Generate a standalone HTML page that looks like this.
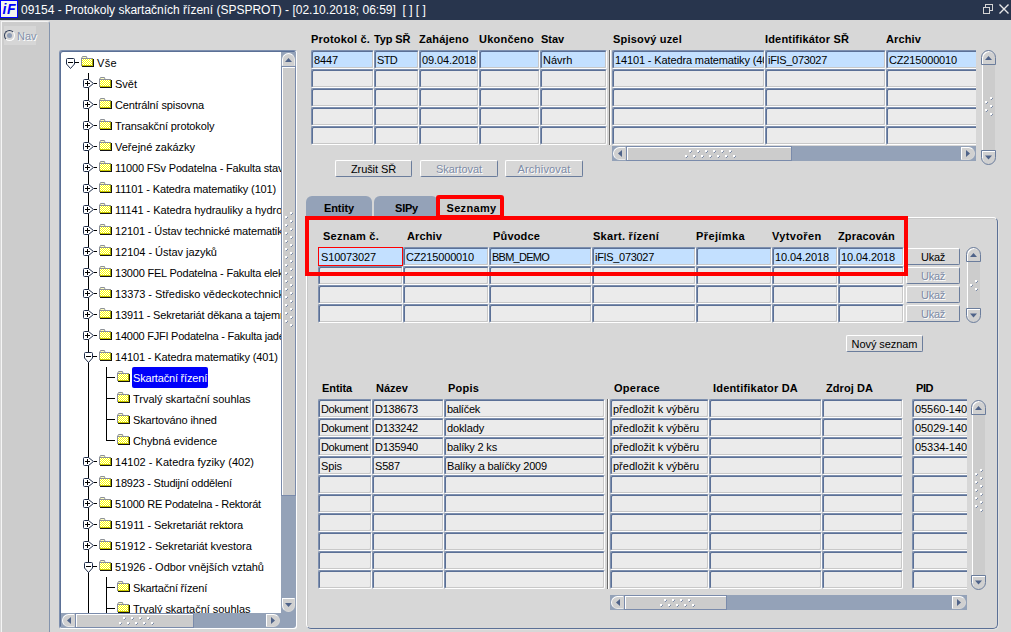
<!DOCTYPE html>
<html lang="cs"><head><meta charset="utf-8"><title>09154 - Protokoly skartačních řízení</title>
<style>
html,body{margin:0;padding:0}
body{width:1011px;height:632px;overflow:hidden;background:#d7d7d7;position:relative;font-family:"Liberation Sans",sans-serif;font-size:11px;color:#000}
div,span{box-sizing:border-box}
.a{position:absolute}
#title{left:0;top:0;width:1011px;height:20px;background:#28354d;color:#fff;font-size:12px;line-height:20px;white-space:nowrap}
#title span.tt{position:absolute;left:21px;top:0}
#nav{left:1px;top:21px;width:49px;height:611px;background:#cccccc;border-left:1px solid #f4f4f4;border-top:1px solid #f4f4f4;border-right:1px solid #8494ad;border-top-right-radius:3px}
.f{position:absolute;height:19px;border:1px solid;border-color:#7d8fae #fff #fff #7d8fae;border-radius:2px;background:#ebebeb;box-shadow:inset 1px 1px 0 #5b7096,inset -1px -1px 0 #c8c8c8;line-height:18px;padding-left:2px;white-space:nowrap;overflow:hidden;font-size:11px}
.f.s{background:#c3e0ff}
.l{position:absolute;font-weight:bold;font-size:11px;line-height:13px;white-space:nowrap}
.b{position:absolute;height:17px;border:1px solid;border-color:#fff #6b7d9c #6b7d9c #fff;border-radius:2px;background:#d7d7d7;text-align:center;line-height:16px;font-size:11px;white-space:nowrap}
.b.d{color:#7d8ba6;text-shadow:1px 1px 0 #fff}
.tab{position:absolute;top:196px;height:20px;background:#94a2b8;border-radius:6px 6px 0 0;font-weight:bold;text-align:center;line-height:24px}
.red{position:absolute;border:4px solid #ff0000}
.trk{position:absolute;background:#94a2b8}
.th{position:absolute;background:#cccccc;border:1px solid;border-color:#fff #8e9cb5 #8e9cb5 #fff}
.ab{position:absolute;width:15px;height:15px;background:#d0d0d0;border:1px solid #6b7d9c;box-shadow:inset 1px 1px 0 #fff}
.dt{position:absolute;width:2px;height:2px;background:#fff}
.dt::after{content:"";position:absolute;left:2px;top:1px;width:1px;height:1px;background:#7b8ba8;box-shadow:-1px 1px 0 #7b8ba8}
.t{position:absolute;white-space:nowrap;line-height:13px;font-size:11px}
.vl{position:absolute;width:1px;background:#000}
.hl{position:absolute;height:1px;background:#000}
</style></head>
<body>
<svg width="0" height="0" style="position:absolute"><defs><pattern id="dz" width="2" height="2" patternUnits="userSpaceOnUse"><rect width="2" height="2" fill="#ffff00"/><rect x="0" y="0" width="1" height="1" fill="#fff"/><rect x="1" y="1" width="1" height="1" fill="#fff"/></pattern></defs></svg>
<div id="title" class="a"><span class="tt">09154 - Protokoly skartačních řízení (SPSPROT) - [02.10.2018; 06:59]&nbsp; [ ] [ ]</span></div>
<svg class="a" style="left:0;top:0" width="19" height="19" viewBox="0 0 19 19"><rect x="0" y="0" width="18" height="18" fill="#0000ff"/><rect x="1" y="1" width="16" height="16" fill="#f4f4ee"/><text x="2.5" y="14" font-family="Liberation Sans" font-weight="bold" font-style="italic" font-size="14" fill="#0000ff" textLength="13">iF</text></svg>
<svg class="a" style="left:980px;top:0" width="31" height="20" viewBox="0 0 31 20"><g fill="none" stroke="#d4d4d4" stroke-width="1"><rect x="5.5" y="4.5" width="7" height="6"/><rect x="3.5" y="7.5" width="6" height="6" fill="#28354d"/><path d="M19.5 4.5 L28.5 13.5 M28.5 4.5 L19.5 13.5" stroke-width="1.4" stroke="#e8e8e8"/></g></svg>
<div id="nav" class="a"></div>
<div class="a" style="left:4px;top:26px;width:32px;height:19px;background:#d6d6d6"></div>
<div class="a" style="left:4px;top:30px;width:11px;height:11px;border-radius:50%;background:#d6d6d6;border:1px solid;border-color:#2f3d58 #fff #fff #2f3d58;transform:rotate(0deg)"></div><div class="a" style="left:7px;top:33px;width:5px;height:5px;border-radius:50%;background:#8e9db6"></div>
<div class="t" style="left:17px;top:30px;color:#8492ab;text-shadow:1px 1px 0 #fff">Nav</div>
<div class="a" style="left:59px;top:50px;width:238px;height:579px;background:#fff;border:1px solid;border-color:#7d8fae #fff #fff #7d8fae;border-radius:3px;box-shadow:inset 1px 1px 0 #5b7096"></div>
<div class="a" id="tree" style="left:62px;top:52px;width:220px;height:561px;overflow:hidden">
<div class="vl" style="left:26px;top:21px;height:560px"></div>
<div class="vl" style="left:44px;top:315px;height:74px"></div>
<div class="vl" style="left:44px;top:525px;height:60px"></div>
<svg class="a" style="left:4px;top:6px" width="13" height="12" viewBox="0 0 13 12"><path d="M.5 1.5 Q.5 .5 1.5 .5 H7.5 Q8.5 .5 8.5 1.5 V6 L4.5 10.5 L.5 6Z" fill="#fff" stroke="#1e2c48" stroke-width="1"/><path d="M2 4.5 H7" stroke="#000" stroke-width="1"/><path d="M9 4.5H13" stroke="#000" stroke-width="1"/></svg>
<svg class="a" style="left:19px;top:4px" width="13" height="11" viewBox="0 0 13 11"><path d="M0.5 2.5 L1.5 0.5 H5.5 L6 2.5" fill="#ffffc0" stroke="#8c9098" stroke-width="1"/><rect x="0" y="2" width="12" height="8" fill="#8c9098"/><rect x="1" y="3" width="10" height="6" fill="url(#dz)"/><rect x="11" y="3" width="1" height="7" fill="#a8a800"/><rect x="1" y="9" width="11" height="1" fill="#c8c800"/><rect x="12" y="3" width="1" height="8" fill="#111"/><rect x="1" y="10" width="12" height="1" fill="#111"/></svg>
<div class="t" style="left:35px;top:5px"><span style="letter-spacing:0.34px">Vše</span></div>
<svg class="a" style="left:21px;top:27px" width="14" height="10" viewBox="0 0 14 10"><path d="M1.5 .5 H5.5 L10.5 4.5 L5.5 8.5 H1.5 Q.5 8.5 .5 7.5 V1.5 Q.5 .5 1.5 .5Z" fill="#fff" stroke="#1e2c48" stroke-width="1"/><path d="M2 4.5 H7 M4.5 2 V7" stroke="#000" stroke-width="1"/><path d="M11 4.5H14" stroke="#000" stroke-width="1"/></svg>
<svg class="a" style="left:37px;top:25px" width="13" height="11" viewBox="0 0 13 11"><path d="M0.5 2.5 L1.5 0.5 H5.5 L6 2.5" fill="#ffffc0" stroke="#8c9098" stroke-width="1"/><rect x="0" y="2" width="12" height="8" fill="#8c9098"/><rect x="1" y="3" width="10" height="6" fill="url(#dz)"/><rect x="11" y="3" width="1" height="7" fill="#a8a800"/><rect x="1" y="9" width="11" height="1" fill="#c8c800"/><rect x="12" y="3" width="1" height="8" fill="#111"/><rect x="1" y="10" width="12" height="1" fill="#111"/></svg>
<div class="t" style="left:53px;top:26px">Svět</div>
<svg class="a" style="left:21px;top:48px" width="14" height="10" viewBox="0 0 14 10"><path d="M1.5 .5 H5.5 L10.5 4.5 L5.5 8.5 H1.5 Q.5 8.5 .5 7.5 V1.5 Q.5 .5 1.5 .5Z" fill="#fff" stroke="#1e2c48" stroke-width="1"/><path d="M2 4.5 H7 M4.5 2 V7" stroke="#000" stroke-width="1"/><path d="M11 4.5H14" stroke="#000" stroke-width="1"/></svg>
<svg class="a" style="left:37px;top:46px" width="13" height="11" viewBox="0 0 13 11"><path d="M0.5 2.5 L1.5 0.5 H5.5 L6 2.5" fill="#ffffc0" stroke="#8c9098" stroke-width="1"/><rect x="0" y="2" width="12" height="8" fill="#8c9098"/><rect x="1" y="3" width="10" height="6" fill="url(#dz)"/><rect x="11" y="3" width="1" height="7" fill="#a8a800"/><rect x="1" y="9" width="11" height="1" fill="#c8c800"/><rect x="12" y="3" width="1" height="8" fill="#111"/><rect x="1" y="10" width="12" height="1" fill="#111"/></svg>
<div class="t" style="left:53px;top:47px"><span style="letter-spacing:-0.12px">Centrální spisovna</span></div>
<svg class="a" style="left:21px;top:69px" width="14" height="10" viewBox="0 0 14 10"><path d="M1.5 .5 H5.5 L10.5 4.5 L5.5 8.5 H1.5 Q.5 8.5 .5 7.5 V1.5 Q.5 .5 1.5 .5Z" fill="#fff" stroke="#1e2c48" stroke-width="1"/><path d="M2 4.5 H7 M4.5 2 V7" stroke="#000" stroke-width="1"/><path d="M11 4.5H14" stroke="#000" stroke-width="1"/></svg>
<svg class="a" style="left:37px;top:67px" width="13" height="11" viewBox="0 0 13 11"><path d="M0.5 2.5 L1.5 0.5 H5.5 L6 2.5" fill="#ffffc0" stroke="#8c9098" stroke-width="1"/><rect x="0" y="2" width="12" height="8" fill="#8c9098"/><rect x="1" y="3" width="10" height="6" fill="url(#dz)"/><rect x="11" y="3" width="1" height="7" fill="#a8a800"/><rect x="1" y="9" width="11" height="1" fill="#c8c800"/><rect x="12" y="3" width="1" height="8" fill="#111"/><rect x="1" y="10" width="12" height="1" fill="#111"/></svg>
<div class="t" style="left:53px;top:68px"><span style="letter-spacing:-0.11px">Transakční protokoly</span></div>
<svg class="a" style="left:21px;top:90px" width="14" height="10" viewBox="0 0 14 10"><path d="M1.5 .5 H5.5 L10.5 4.5 L5.5 8.5 H1.5 Q.5 8.5 .5 7.5 V1.5 Q.5 .5 1.5 .5Z" fill="#fff" stroke="#1e2c48" stroke-width="1"/><path d="M2 4.5 H7 M4.5 2 V7" stroke="#000" stroke-width="1"/><path d="M11 4.5H14" stroke="#000" stroke-width="1"/></svg>
<svg class="a" style="left:37px;top:88px" width="13" height="11" viewBox="0 0 13 11"><path d="M0.5 2.5 L1.5 0.5 H5.5 L6 2.5" fill="#ffffc0" stroke="#8c9098" stroke-width="1"/><rect x="0" y="2" width="12" height="8" fill="#8c9098"/><rect x="1" y="3" width="10" height="6" fill="url(#dz)"/><rect x="11" y="3" width="1" height="7" fill="#a8a800"/><rect x="1" y="9" width="11" height="1" fill="#c8c800"/><rect x="12" y="3" width="1" height="8" fill="#111"/><rect x="1" y="10" width="12" height="1" fill="#111"/></svg>
<div class="t" style="left:53px;top:89px">Veřejné zakázky</div>
<svg class="a" style="left:21px;top:111px" width="14" height="10" viewBox="0 0 14 10"><path d="M1.5 .5 H5.5 L10.5 4.5 L5.5 8.5 H1.5 Q.5 8.5 .5 7.5 V1.5 Q.5 .5 1.5 .5Z" fill="#fff" stroke="#1e2c48" stroke-width="1"/><path d="M2 4.5 H7 M4.5 2 V7" stroke="#000" stroke-width="1"/><path d="M11 4.5H14" stroke="#000" stroke-width="1"/></svg>
<svg class="a" style="left:37px;top:109px" width="13" height="11" viewBox="0 0 13 11"><path d="M0.5 2.5 L1.5 0.5 H5.5 L6 2.5" fill="#ffffc0" stroke="#8c9098" stroke-width="1"/><rect x="0" y="2" width="12" height="8" fill="#8c9098"/><rect x="1" y="3" width="10" height="6" fill="url(#dz)"/><rect x="11" y="3" width="1" height="7" fill="#a8a800"/><rect x="1" y="9" width="11" height="1" fill="#c8c800"/><rect x="12" y="3" width="1" height="8" fill="#111"/><rect x="1" y="10" width="12" height="1" fill="#111"/></svg>
<div class="t" style="left:53px;top:110px"><span style="letter-spacing:-0.17px">11000 FSv Podatelna - Fakulta stavební</span></div>
<svg class="a" style="left:21px;top:132px" width="14" height="10" viewBox="0 0 14 10"><path d="M1.5 .5 H5.5 L10.5 4.5 L5.5 8.5 H1.5 Q.5 8.5 .5 7.5 V1.5 Q.5 .5 1.5 .5Z" fill="#fff" stroke="#1e2c48" stroke-width="1"/><path d="M2 4.5 H7 M4.5 2 V7" stroke="#000" stroke-width="1"/><path d="M11 4.5H14" stroke="#000" stroke-width="1"/></svg>
<svg class="a" style="left:37px;top:130px" width="13" height="11" viewBox="0 0 13 11"><path d="M0.5 2.5 L1.5 0.5 H5.5 L6 2.5" fill="#ffffc0" stroke="#8c9098" stroke-width="1"/><rect x="0" y="2" width="12" height="8" fill="#8c9098"/><rect x="1" y="3" width="10" height="6" fill="url(#dz)"/><rect x="11" y="3" width="1" height="7" fill="#a8a800"/><rect x="1" y="9" width="11" height="1" fill="#c8c800"/><rect x="12" y="3" width="1" height="8" fill="#111"/><rect x="1" y="10" width="12" height="1" fill="#111"/></svg>
<div class="t" style="left:53px;top:131px"><span style="letter-spacing:-0.13px">11101 - Katedra matematiky (101)</span></div>
<svg class="a" style="left:21px;top:153px" width="14" height="10" viewBox="0 0 14 10"><path d="M1.5 .5 H5.5 L10.5 4.5 L5.5 8.5 H1.5 Q.5 8.5 .5 7.5 V1.5 Q.5 .5 1.5 .5Z" fill="#fff" stroke="#1e2c48" stroke-width="1"/><path d="M2 4.5 H7 M4.5 2 V7" stroke="#000" stroke-width="1"/><path d="M11 4.5H14" stroke="#000" stroke-width="1"/></svg>
<svg class="a" style="left:37px;top:151px" width="13" height="11" viewBox="0 0 13 11"><path d="M0.5 2.5 L1.5 0.5 H5.5 L6 2.5" fill="#ffffc0" stroke="#8c9098" stroke-width="1"/><rect x="0" y="2" width="12" height="8" fill="#8c9098"/><rect x="1" y="3" width="10" height="6" fill="url(#dz)"/><rect x="11" y="3" width="1" height="7" fill="#a8a800"/><rect x="1" y="9" width="11" height="1" fill="#c8c800"/><rect x="12" y="3" width="1" height="8" fill="#111"/><rect x="1" y="10" width="12" height="1" fill="#111"/></svg>
<div class="t" style="left:53px;top:152px"><span style="letter-spacing:-0.07px">11141 - Katedra hydrauliky a hydrologie</span></div>
<svg class="a" style="left:21px;top:174px" width="14" height="10" viewBox="0 0 14 10"><path d="M1.5 .5 H5.5 L10.5 4.5 L5.5 8.5 H1.5 Q.5 8.5 .5 7.5 V1.5 Q.5 .5 1.5 .5Z" fill="#fff" stroke="#1e2c48" stroke-width="1"/><path d="M2 4.5 H7 M4.5 2 V7" stroke="#000" stroke-width="1"/><path d="M11 4.5H14" stroke="#000" stroke-width="1"/></svg>
<svg class="a" style="left:37px;top:172px" width="13" height="11" viewBox="0 0 13 11"><path d="M0.5 2.5 L1.5 0.5 H5.5 L6 2.5" fill="#ffffc0" stroke="#8c9098" stroke-width="1"/><rect x="0" y="2" width="12" height="8" fill="#8c9098"/><rect x="1" y="3" width="10" height="6" fill="url(#dz)"/><rect x="11" y="3" width="1" height="7" fill="#a8a800"/><rect x="1" y="9" width="11" height="1" fill="#c8c800"/><rect x="12" y="3" width="1" height="8" fill="#111"/><rect x="1" y="10" width="12" height="1" fill="#111"/></svg>
<div class="t" style="left:53px;top:173px"><span style="letter-spacing:-0.13px">12101 - Ústav technické matematiky</span></div>
<svg class="a" style="left:21px;top:195px" width="14" height="10" viewBox="0 0 14 10"><path d="M1.5 .5 H5.5 L10.5 4.5 L5.5 8.5 H1.5 Q.5 8.5 .5 7.5 V1.5 Q.5 .5 1.5 .5Z" fill="#fff" stroke="#1e2c48" stroke-width="1"/><path d="M2 4.5 H7 M4.5 2 V7" stroke="#000" stroke-width="1"/><path d="M11 4.5H14" stroke="#000" stroke-width="1"/></svg>
<svg class="a" style="left:37px;top:193px" width="13" height="11" viewBox="0 0 13 11"><path d="M0.5 2.5 L1.5 0.5 H5.5 L6 2.5" fill="#ffffc0" stroke="#8c9098" stroke-width="1"/><rect x="0" y="2" width="12" height="8" fill="#8c9098"/><rect x="1" y="3" width="10" height="6" fill="url(#dz)"/><rect x="11" y="3" width="1" height="7" fill="#a8a800"/><rect x="1" y="9" width="11" height="1" fill="#c8c800"/><rect x="12" y="3" width="1" height="8" fill="#111"/><rect x="1" y="10" width="12" height="1" fill="#111"/></svg>
<div class="t" style="left:53px;top:194px"><span style="letter-spacing:-0.04px">12104 - Ústav jazyků</span></div>
<svg class="a" style="left:21px;top:216px" width="14" height="10" viewBox="0 0 14 10"><path d="M1.5 .5 H5.5 L10.5 4.5 L5.5 8.5 H1.5 Q.5 8.5 .5 7.5 V1.5 Q.5 .5 1.5 .5Z" fill="#fff" stroke="#1e2c48" stroke-width="1"/><path d="M2 4.5 H7 M4.5 2 V7" stroke="#000" stroke-width="1"/><path d="M11 4.5H14" stroke="#000" stroke-width="1"/></svg>
<svg class="a" style="left:37px;top:214px" width="13" height="11" viewBox="0 0 13 11"><path d="M0.5 2.5 L1.5 0.5 H5.5 L6 2.5" fill="#ffffc0" stroke="#8c9098" stroke-width="1"/><rect x="0" y="2" width="12" height="8" fill="#8c9098"/><rect x="1" y="3" width="10" height="6" fill="url(#dz)"/><rect x="11" y="3" width="1" height="7" fill="#a8a800"/><rect x="1" y="9" width="11" height="1" fill="#c8c800"/><rect x="12" y="3" width="1" height="8" fill="#111"/><rect x="1" y="10" width="12" height="1" fill="#111"/></svg>
<div class="t" style="left:53px;top:215px"><span style="letter-spacing:-0.20px">13000 FEL Podatelna - Fakulta elektrotechnická</span></div>
<svg class="a" style="left:21px;top:237px" width="14" height="10" viewBox="0 0 14 10"><path d="M1.5 .5 H5.5 L10.5 4.5 L5.5 8.5 H1.5 Q.5 8.5 .5 7.5 V1.5 Q.5 .5 1.5 .5Z" fill="#fff" stroke="#1e2c48" stroke-width="1"/><path d="M2 4.5 H7 M4.5 2 V7" stroke="#000" stroke-width="1"/><path d="M11 4.5H14" stroke="#000" stroke-width="1"/></svg>
<svg class="a" style="left:37px;top:235px" width="13" height="11" viewBox="0 0 13 11"><path d="M0.5 2.5 L1.5 0.5 H5.5 L6 2.5" fill="#ffffc0" stroke="#8c9098" stroke-width="1"/><rect x="0" y="2" width="12" height="8" fill="#8c9098"/><rect x="1" y="3" width="10" height="6" fill="url(#dz)"/><rect x="11" y="3" width="1" height="7" fill="#a8a800"/><rect x="1" y="9" width="11" height="1" fill="#c8c800"/><rect x="12" y="3" width="1" height="8" fill="#111"/><rect x="1" y="10" width="12" height="1" fill="#111"/></svg>
<div class="t" style="left:53px;top:236px"><span style="letter-spacing:-0.05px">13373 - Středisko vědeckotechnických informací</span></div>
<svg class="a" style="left:21px;top:258px" width="14" height="10" viewBox="0 0 14 10"><path d="M1.5 .5 H5.5 L10.5 4.5 L5.5 8.5 H1.5 Q.5 8.5 .5 7.5 V1.5 Q.5 .5 1.5 .5Z" fill="#fff" stroke="#1e2c48" stroke-width="1"/><path d="M2 4.5 H7 M4.5 2 V7" stroke="#000" stroke-width="1"/><path d="M11 4.5H14" stroke="#000" stroke-width="1"/></svg>
<svg class="a" style="left:37px;top:256px" width="13" height="11" viewBox="0 0 13 11"><path d="M0.5 2.5 L1.5 0.5 H5.5 L6 2.5" fill="#ffffc0" stroke="#8c9098" stroke-width="1"/><rect x="0" y="2" width="12" height="8" fill="#8c9098"/><rect x="1" y="3" width="10" height="6" fill="url(#dz)"/><rect x="11" y="3" width="1" height="7" fill="#a8a800"/><rect x="1" y="9" width="11" height="1" fill="#c8c800"/><rect x="12" y="3" width="1" height="8" fill="#111"/><rect x="1" y="10" width="12" height="1" fill="#111"/></svg>
<div class="t" style="left:53px;top:257px"><span style="letter-spacing:-0.18px">13911 - Sekretariát děkana a tajemníka</span></div>
<svg class="a" style="left:21px;top:279px" width="14" height="10" viewBox="0 0 14 10"><path d="M1.5 .5 H5.5 L10.5 4.5 L5.5 8.5 H1.5 Q.5 8.5 .5 7.5 V1.5 Q.5 .5 1.5 .5Z" fill="#fff" stroke="#1e2c48" stroke-width="1"/><path d="M2 4.5 H7 M4.5 2 V7" stroke="#000" stroke-width="1"/><path d="M11 4.5H14" stroke="#000" stroke-width="1"/></svg>
<svg class="a" style="left:37px;top:277px" width="13" height="11" viewBox="0 0 13 11"><path d="M0.5 2.5 L1.5 0.5 H5.5 L6 2.5" fill="#ffffc0" stroke="#8c9098" stroke-width="1"/><rect x="0" y="2" width="12" height="8" fill="#8c9098"/><rect x="1" y="3" width="10" height="6" fill="url(#dz)"/><rect x="11" y="3" width="1" height="7" fill="#a8a800"/><rect x="1" y="9" width="11" height="1" fill="#c8c800"/><rect x="12" y="3" width="1" height="8" fill="#111"/><rect x="1" y="10" width="12" height="1" fill="#111"/></svg>
<div class="t" style="left:53px;top:278px"><span style="letter-spacing:-0.24px">14000 FJFI Podatelna - Fakulta jaderná</span></div>
<svg class="a" style="left:22px;top:300px" width="13" height="12" viewBox="0 0 13 12"><path d="M.5 1.5 Q.5 .5 1.5 .5 H7.5 Q8.5 .5 8.5 1.5 V6 L4.5 10.5 L.5 6Z" fill="#fff" stroke="#1e2c48" stroke-width="1"/><path d="M2 4.5 H7" stroke="#000" stroke-width="1"/><path d="M9 4.5H13" stroke="#000" stroke-width="1"/></svg>
<svg class="a" style="left:37px;top:298px" width="13" height="11" viewBox="0 0 13 11"><path d="M0.5 2.5 L1.5 0.5 H5.5 L6 2.5" fill="#ffffc0" stroke="#8c9098" stroke-width="1"/><rect x="0" y="2" width="12" height="8" fill="#8c9098"/><rect x="1" y="3" width="10" height="6" fill="url(#dz)"/><rect x="11" y="3" width="1" height="7" fill="#a8a800"/><rect x="1" y="9" width="11" height="1" fill="#c8c800"/><rect x="12" y="3" width="1" height="8" fill="#111"/><rect x="1" y="10" width="12" height="1" fill="#111"/></svg>
<div class="t" style="left:53px;top:299px"><span style="letter-spacing:-0.13px">14101 - Katedra matematiky (401)</span></div>
<div class="hl" style="left:44px;top:325px;width:9px"></div>
<svg class="a" style="left:55px;top:319px" width="13" height="11" viewBox="0 0 13 11"><path d="M0.5 2.5 L1.5 0.5 H5.5 L6 2.5" fill="#ffffc0" stroke="#8c9098" stroke-width="1"/><rect x="0" y="2" width="12" height="8" fill="#8c9098"/><rect x="1" y="3" width="10" height="6" fill="url(#dz)"/><rect x="11" y="3" width="1" height="7" fill="#a8a800"/><rect x="1" y="9" width="11" height="1" fill="#c8c800"/><rect x="12" y="3" width="1" height="8" fill="#111"/><rect x="1" y="10" width="12" height="1" fill="#111"/></svg>
<div class="a" style="left:70px;top:315px;width:76px;height:21px;background:#0000fa;border-radius:2px"></div>
<div class="t" style="left:71px;top:320px;color:#fff"><span style="letter-spacing:-0.19px">Skartační řízení</span></div>
<div class="hl" style="left:44px;top:346px;width:9px"></div>
<svg class="a" style="left:55px;top:340px" width="13" height="11" viewBox="0 0 13 11"><path d="M0.5 2.5 L1.5 0.5 H5.5 L6 2.5" fill="#ffffc0" stroke="#8c9098" stroke-width="1"/><rect x="0" y="2" width="12" height="8" fill="#8c9098"/><rect x="1" y="3" width="10" height="6" fill="url(#dz)"/><rect x="11" y="3" width="1" height="7" fill="#a8a800"/><rect x="1" y="9" width="11" height="1" fill="#c8c800"/><rect x="12" y="3" width="1" height="8" fill="#111"/><rect x="1" y="10" width="12" height="1" fill="#111"/></svg>
<div class="t" style="left:71px;top:341px"><span style="letter-spacing:-0.03px">Trvalý skartační souhlas</span></div>
<div class="hl" style="left:44px;top:367px;width:9px"></div>
<svg class="a" style="left:55px;top:361px" width="13" height="11" viewBox="0 0 13 11"><path d="M0.5 2.5 L1.5 0.5 H5.5 L6 2.5" fill="#ffffc0" stroke="#8c9098" stroke-width="1"/><rect x="0" y="2" width="12" height="8" fill="#8c9098"/><rect x="1" y="3" width="10" height="6" fill="url(#dz)"/><rect x="11" y="3" width="1" height="7" fill="#a8a800"/><rect x="1" y="9" width="11" height="1" fill="#c8c800"/><rect x="12" y="3" width="1" height="8" fill="#111"/><rect x="1" y="10" width="12" height="1" fill="#111"/></svg>
<div class="t" style="left:71px;top:362px"><span style="letter-spacing:-0.11px">Skartováno ihned</span></div>
<div class="hl" style="left:44px;top:388px;width:9px"></div>
<svg class="a" style="left:55px;top:382px" width="13" height="11" viewBox="0 0 13 11"><path d="M0.5 2.5 L1.5 0.5 H5.5 L6 2.5" fill="#ffffc0" stroke="#8c9098" stroke-width="1"/><rect x="0" y="2" width="12" height="8" fill="#8c9098"/><rect x="1" y="3" width="10" height="6" fill="url(#dz)"/><rect x="11" y="3" width="1" height="7" fill="#a8a800"/><rect x="1" y="9" width="11" height="1" fill="#c8c800"/><rect x="12" y="3" width="1" height="8" fill="#111"/><rect x="1" y="10" width="12" height="1" fill="#111"/></svg>
<div class="t" style="left:71px;top:383px"><span style="letter-spacing:-0.07px">Chybná evidence</span></div>
<svg class="a" style="left:21px;top:405px" width="14" height="10" viewBox="0 0 14 10"><path d="M1.5 .5 H5.5 L10.5 4.5 L5.5 8.5 H1.5 Q.5 8.5 .5 7.5 V1.5 Q.5 .5 1.5 .5Z" fill="#fff" stroke="#1e2c48" stroke-width="1"/><path d="M2 4.5 H7 M4.5 2 V7" stroke="#000" stroke-width="1"/><path d="M11 4.5H14" stroke="#000" stroke-width="1"/></svg>
<svg class="a" style="left:37px;top:403px" width="13" height="11" viewBox="0 0 13 11"><path d="M0.5 2.5 L1.5 0.5 H5.5 L6 2.5" fill="#ffffc0" stroke="#8c9098" stroke-width="1"/><rect x="0" y="2" width="12" height="8" fill="#8c9098"/><rect x="1" y="3" width="10" height="6" fill="url(#dz)"/><rect x="11" y="3" width="1" height="7" fill="#a8a800"/><rect x="1" y="9" width="11" height="1" fill="#c8c800"/><rect x="12" y="3" width="1" height="8" fill="#111"/><rect x="1" y="10" width="12" height="1" fill="#111"/></svg>
<div class="t" style="left:53px;top:404px"><span style="letter-spacing:0.03px">14102 - Katedra fyziky (402)</span></div>
<svg class="a" style="left:21px;top:426px" width="14" height="10" viewBox="0 0 14 10"><path d="M1.5 .5 H5.5 L10.5 4.5 L5.5 8.5 H1.5 Q.5 8.5 .5 7.5 V1.5 Q.5 .5 1.5 .5Z" fill="#fff" stroke="#1e2c48" stroke-width="1"/><path d="M2 4.5 H7 M4.5 2 V7" stroke="#000" stroke-width="1"/><path d="M11 4.5H14" stroke="#000" stroke-width="1"/></svg>
<svg class="a" style="left:37px;top:424px" width="13" height="11" viewBox="0 0 13 11"><path d="M0.5 2.5 L1.5 0.5 H5.5 L6 2.5" fill="#ffffc0" stroke="#8c9098" stroke-width="1"/><rect x="0" y="2" width="12" height="8" fill="#8c9098"/><rect x="1" y="3" width="10" height="6" fill="url(#dz)"/><rect x="11" y="3" width="1" height="7" fill="#a8a800"/><rect x="1" y="9" width="11" height="1" fill="#c8c800"/><rect x="12" y="3" width="1" height="8" fill="#111"/><rect x="1" y="10" width="12" height="1" fill="#111"/></svg>
<div class="t" style="left:53px;top:425px"><span style="letter-spacing:-0.22px">18923 - Studijní oddělení</span></div>
<svg class="a" style="left:21px;top:447px" width="14" height="10" viewBox="0 0 14 10"><path d="M1.5 .5 H5.5 L10.5 4.5 L5.5 8.5 H1.5 Q.5 8.5 .5 7.5 V1.5 Q.5 .5 1.5 .5Z" fill="#fff" stroke="#1e2c48" stroke-width="1"/><path d="M2 4.5 H7 M4.5 2 V7" stroke="#000" stroke-width="1"/><path d="M11 4.5H14" stroke="#000" stroke-width="1"/></svg>
<svg class="a" style="left:37px;top:445px" width="13" height="11" viewBox="0 0 13 11"><path d="M0.5 2.5 L1.5 0.5 H5.5 L6 2.5" fill="#ffffc0" stroke="#8c9098" stroke-width="1"/><rect x="0" y="2" width="12" height="8" fill="#8c9098"/><rect x="1" y="3" width="10" height="6" fill="url(#dz)"/><rect x="11" y="3" width="1" height="7" fill="#a8a800"/><rect x="1" y="9" width="11" height="1" fill="#c8c800"/><rect x="12" y="3" width="1" height="8" fill="#111"/><rect x="1" y="10" width="12" height="1" fill="#111"/></svg>
<div class="t" style="left:53px;top:446px"><span style="letter-spacing:-0.24px">51000 RE Podatelna - Rektorát</span></div>
<svg class="a" style="left:21px;top:468px" width="14" height="10" viewBox="0 0 14 10"><path d="M1.5 .5 H5.5 L10.5 4.5 L5.5 8.5 H1.5 Q.5 8.5 .5 7.5 V1.5 Q.5 .5 1.5 .5Z" fill="#fff" stroke="#1e2c48" stroke-width="1"/><path d="M2 4.5 H7 M4.5 2 V7" stroke="#000" stroke-width="1"/><path d="M11 4.5H14" stroke="#000" stroke-width="1"/></svg>
<svg class="a" style="left:37px;top:466px" width="13" height="11" viewBox="0 0 13 11"><path d="M0.5 2.5 L1.5 0.5 H5.5 L6 2.5" fill="#ffffc0" stroke="#8c9098" stroke-width="1"/><rect x="0" y="2" width="12" height="8" fill="#8c9098"/><rect x="1" y="3" width="10" height="6" fill="url(#dz)"/><rect x="11" y="3" width="1" height="7" fill="#a8a800"/><rect x="1" y="9" width="11" height="1" fill="#c8c800"/><rect x="12" y="3" width="1" height="8" fill="#111"/><rect x="1" y="10" width="12" height="1" fill="#111"/></svg>
<div class="t" style="left:53px;top:467px"><span style="letter-spacing:-0.07px">51911 - Sekretariát rektora</span></div>
<svg class="a" style="left:21px;top:489px" width="14" height="10" viewBox="0 0 14 10"><path d="M1.5 .5 H5.5 L10.5 4.5 L5.5 8.5 H1.5 Q.5 8.5 .5 7.5 V1.5 Q.5 .5 1.5 .5Z" fill="#fff" stroke="#1e2c48" stroke-width="1"/><path d="M2 4.5 H7 M4.5 2 V7" stroke="#000" stroke-width="1"/><path d="M11 4.5H14" stroke="#000" stroke-width="1"/></svg>
<svg class="a" style="left:37px;top:487px" width="13" height="11" viewBox="0 0 13 11"><path d="M0.5 2.5 L1.5 0.5 H5.5 L6 2.5" fill="#ffffc0" stroke="#8c9098" stroke-width="1"/><rect x="0" y="2" width="12" height="8" fill="#8c9098"/><rect x="1" y="3" width="10" height="6" fill="url(#dz)"/><rect x="11" y="3" width="1" height="7" fill="#a8a800"/><rect x="1" y="9" width="11" height="1" fill="#c8c800"/><rect x="12" y="3" width="1" height="8" fill="#111"/><rect x="1" y="10" width="12" height="1" fill="#111"/></svg>
<div class="t" style="left:53px;top:488px"><span style="letter-spacing:-0.05px">51912 - Sekretariát kvestora</span></div>
<svg class="a" style="left:22px;top:510px" width="13" height="12" viewBox="0 0 13 12"><path d="M.5 1.5 Q.5 .5 1.5 .5 H7.5 Q8.5 .5 8.5 1.5 V6 L4.5 10.5 L.5 6Z" fill="#fff" stroke="#1e2c48" stroke-width="1"/><path d="M2 4.5 H7" stroke="#000" stroke-width="1"/><path d="M9 4.5H13" stroke="#000" stroke-width="1"/></svg>
<svg class="a" style="left:37px;top:508px" width="13" height="11" viewBox="0 0 13 11"><path d="M0.5 2.5 L1.5 0.5 H5.5 L6 2.5" fill="#ffffc0" stroke="#8c9098" stroke-width="1"/><rect x="0" y="2" width="12" height="8" fill="#8c9098"/><rect x="1" y="3" width="10" height="6" fill="url(#dz)"/><rect x="11" y="3" width="1" height="7" fill="#a8a800"/><rect x="1" y="9" width="11" height="1" fill="#c8c800"/><rect x="12" y="3" width="1" height="8" fill="#111"/><rect x="1" y="10" width="12" height="1" fill="#111"/></svg>
<div class="t" style="left:53px;top:509px"><span style="letter-spacing:-0.03px">51926 - Odbor vnějších vztahů</span></div>
<div class="hl" style="left:44px;top:535px;width:9px"></div>
<svg class="a" style="left:55px;top:529px" width="13" height="11" viewBox="0 0 13 11"><path d="M0.5 2.5 L1.5 0.5 H5.5 L6 2.5" fill="#ffffc0" stroke="#8c9098" stroke-width="1"/><rect x="0" y="2" width="12" height="8" fill="#8c9098"/><rect x="1" y="3" width="10" height="6" fill="url(#dz)"/><rect x="11" y="3" width="1" height="7" fill="#a8a800"/><rect x="1" y="9" width="11" height="1" fill="#c8c800"/><rect x="12" y="3" width="1" height="8" fill="#111"/><rect x="1" y="10" width="12" height="1" fill="#111"/></svg>
<div class="t" style="left:71px;top:530px"><span style="letter-spacing:-0.19px">Skartační řízení</span></div>
<div class="hl" style="left:44px;top:556px;width:9px"></div>
<svg class="a" style="left:55px;top:550px" width="13" height="11" viewBox="0 0 13 11"><path d="M0.5 2.5 L1.5 0.5 H5.5 L6 2.5" fill="#ffffc0" stroke="#8c9098" stroke-width="1"/><rect x="0" y="2" width="12" height="8" fill="#8c9098"/><rect x="1" y="3" width="10" height="6" fill="url(#dz)"/><rect x="11" y="3" width="1" height="7" fill="#a8a800"/><rect x="1" y="9" width="11" height="1" fill="#c8c800"/><rect x="12" y="3" width="1" height="8" fill="#111"/><rect x="1" y="10" width="12" height="1" fill="#111"/></svg>
<div class="t" style="left:71px;top:551px"><span style="letter-spacing:-0.03px">Trvalý skartační souhlas</span></div>
</div>
<div class="trk" style="left:281px;top:52px;width:15px;height:561px"></div><div class="th" style="left:281px;top:66px;width:15px;height:430px;border-width:1px;border-color:#7a8bab;box-shadow:inset 1px 1px 0 #fff"></div><div class="a" style="left:282px;top:53px;width:13px;height:13px;border-radius:7px 7px 0 0;background:#d0d0d0;border:1px solid;border-color:#fff #e8e8e8 #d0d0d0 #fff"></div><svg class="a" style="left:281px;top:52px" width="15" height="15"><polygon points="4,10 11,10 7.5,6" fill="#4f6389"/></svg><div class="a" style="left:282px;top:598px;width:13px;height:14px;border-radius:0 0 7px 7px;background:#d0d0d0;border:1px solid;border-color:#fff #d8d8d8 #d8d8d8 #fff"></div><svg class="a" style="left:281px;top:598px" width="15" height="15"><polygon points="4,5 11,5 7.5,9" fill="#4f6389"/></svg><div class="dt" style="left:290px;top:212px"></div><div class="dt" style="left:285px;top:216px"></div><div class="dt" style="left:290px;top:220px"></div><div class="dt" style="left:285px;top:224px"></div><div class="dt" style="left:290px;top:228px"></div><div class="dt" style="left:285px;top:232px"></div><div class="dt" style="left:290px;top:236px"></div><div class="dt" style="left:285px;top:240px"></div><div class="dt" style="left:290px;top:244px"></div><div class="dt" style="left:285px;top:248px"></div><div class="dt" style="left:290px;top:252px"></div><div class="dt" style="left:285px;top:256px"></div><div class="dt" style="left:290px;top:260px"></div><div class="dt" style="left:285px;top:264px"></div><div class="dt" style="left:290px;top:268px"></div><div class="dt" style="left:285px;top:272px"></div><div class="dt" style="left:290px;top:276px"></div><div class="dt" style="left:285px;top:280px"></div><div class="dt" style="left:290px;top:284px"></div><div class="dt" style="left:285px;top:288px"></div><div class="dt" style="left:290px;top:292px"></div><div class="dt" style="left:285px;top:296px"></div><div class="dt" style="left:290px;top:300px"></div><div class="dt" style="left:285px;top:304px"></div><div class="dt" style="left:290px;top:308px"></div><div class="dt" style="left:285px;top:312px"></div><div class="dt" style="left:290px;top:316px"></div><div class="dt" style="left:285px;top:320px"></div><div class="dt" style="left:290px;top:324px"></div>
<div class="trk" style="left:61px;top:613px;width:220px;height:15px"></div><div class="th" style="left:75px;top:613px;height:15px;width:119px;border-width:1px;border-color:#7a8bab;box-shadow:inset 1px 1px 0 #fff"></div><div class="a" style="left:62px;top:614px;width:13px;height:13px;border-radius:7px 0 0 7px;background:#d0d0d0;border:1px solid;border-color:#fff #d0d0d0 #e8e8e8 #fff"></div><svg class="a" style="left:61px;top:613px" width="15" height="15"><polygon points="10,4 10,11 6,7.5" fill="#4f6389"/></svg><div class="a" style="left:266px;top:614px;width:14px;height:13px;border-radius:0 7px 7px 0;background:#d0d0d0;border:1px solid;border-color:#fff #d8d8d8 #d8d8d8 #fff"></div><svg class="a" style="left:266px;top:613px" width="15" height="15"><polygon points="5,4 5,11 9,7.5" fill="#4f6389"/></svg><div class="dt" style="left:119px;top:622px"></div><div class="dt" style="left:123px;top:617px"></div><div class="dt" style="left:127px;top:622px"></div><div class="dt" style="left:131px;top:617px"></div><div class="dt" style="left:135px;top:622px"></div><div class="dt" style="left:139px;top:617px"></div><div class="dt" style="left:143px;top:622px"></div><div class="dt" style="left:147px;top:617px"></div><div class="dt" style="left:151px;top:622px"></div>
<div class="trk" style="left:281px;top:613px;width:15px;height:15px;border-bottom-right-radius:3px"></div>
<div class="a" style="left:0;top:0;width:976px;height:632px;overflow:hidden">
<div class="l" style="left:311px;top:33px"><span style="letter-spacing:0.19px">Protokol č.</span></div>
<div class="f s" style="left:311px;top:50px;width:63px"><span style="letter-spacing:-0.12px">8447</span></div>
<div class="f" style="left:311px;top:69px;width:63px"></div>
<div class="f" style="left:311px;top:88px;width:63px"></div>
<div class="f" style="left:311px;top:107px;width:63px"></div>
<div class="f" style="left:311px;top:126px;width:63px"></div>
<div class="l" style="left:374px;top:33px"><span style="letter-spacing:-0.15px">Typ SŘ</span></div>
<div class="f s" style="left:374px;top:50px;width:45px"><span style="letter-spacing:-0.67px">STD</span></div>
<div class="f" style="left:374px;top:69px;width:45px"></div>
<div class="f" style="left:374px;top:88px;width:45px"></div>
<div class="f" style="left:374px;top:107px;width:45px"></div>
<div class="f" style="left:374px;top:126px;width:45px"></div>
<div class="l" style="left:419px;top:33px"><span style="letter-spacing:0.21px">Zahájeno</span></div>
<div class="f s" style="left:419px;top:50px;width:60px"><span style="letter-spacing:-0.11px">09.04.2018</span></div>
<div class="f" style="left:419px;top:69px;width:60px"></div>
<div class="f" style="left:419px;top:88px;width:60px"></div>
<div class="f" style="left:419px;top:107px;width:60px"></div>
<div class="f" style="left:419px;top:126px;width:60px"></div>
<div class="l" style="left:479px;top:33px"><span style="letter-spacing:0.23px">Ukončeno</span></div>
<div class="f s" style="left:479px;top:50px;width:61px"></div>
<div class="f" style="left:479px;top:69px;width:61px"></div>
<div class="f" style="left:479px;top:88px;width:61px"></div>
<div class="f" style="left:479px;top:107px;width:61px"></div>
<div class="f" style="left:479px;top:126px;width:61px"></div>
<div class="l" style="left:541px;top:33px">Stav</div>
<div class="f s" style="left:540px;top:50px;width:67px">Návrh</div>
<div class="f" style="left:540px;top:69px;width:67px"></div>
<div class="f" style="left:540px;top:88px;width:67px"></div>
<div class="f" style="left:540px;top:107px;width:67px"></div>
<div class="f" style="left:540px;top:126px;width:67px"></div>
<div class="l" style="left:613px;top:33px"><span style="letter-spacing:0.19px">Spisový uzel</span></div>
<div class="f s" style="left:612px;top:50px;width:153px"><span style="letter-spacing:-0.13px">14101 - Katedra matematiky (401)</span></div>
<div class="f" style="left:612px;top:69px;width:153px"></div>
<div class="f" style="left:612px;top:88px;width:153px"></div>
<div class="f" style="left:612px;top:107px;width:153px"></div>
<div class="f" style="left:612px;top:126px;width:153px"></div>
<div class="l" style="left:765px;top:33px"><span style="letter-spacing:0.17px">Identifikátor SŘ</span></div>
<div class="f s" style="left:765px;top:50px;width:121px"><span style="letter-spacing:-0.31px">iFIS_073027</span></div>
<div class="f" style="left:765px;top:69px;width:121px"></div>
<div class="f" style="left:765px;top:88px;width:121px"></div>
<div class="f" style="left:765px;top:107px;width:121px"></div>
<div class="f" style="left:765px;top:126px;width:121px"></div>
<div class="l" style="left:886px;top:33px"><span style="letter-spacing:0.12px">Archiv</span></div>
<div class="f s" style="left:886px;top:50px;width:94px"><span style="letter-spacing:-0.16px">CZ215000010</span></div>
<div class="f" style="left:886px;top:69px;width:94px"></div>
<div class="f" style="left:886px;top:88px;width:94px"></div>
<div class="f" style="left:886px;top:107px;width:94px"></div>
<div class="f" style="left:886px;top:126px;width:94px"></div>
</div>
<div class="a" style="left:609px;top:50px;width:1px;height:95px;background:#6a6a6a"></div><div class="a" style="left:610px;top:50px;width:1px;height:95px;background:#fff"></div>
<div class="trk" style="left:612px;top:146px;width:364px;height:15px"></div><div class="th" style="left:626px;top:146px;height:15px;width:166px;border-width:1px;border-color:#7a8bab;box-shadow:inset 1px 1px 0 #fff"></div><div class="a" style="left:613px;top:147px;width:13px;height:13px;border-radius:7px 0 0 7px;background:#d0d0d0;border:1px solid;border-color:#fff #d0d0d0 #e8e8e8 #fff"></div><svg class="a" style="left:612px;top:146px" width="15" height="15"><polygon points="10,4 10,11 6,7.5" fill="#4f6389"/></svg><div class="a" style="left:961px;top:147px;width:14px;height:13px;border-radius:0 7px 7px 0;background:#d0d0d0;border:1px solid;border-color:#fff #d8d8d8 #d8d8d8 #fff"></div><svg class="a" style="left:961px;top:146px" width="15" height="15"><polygon points="5,4 5,11 9,7.5" fill="#4f6389"/></svg><div class="dt" style="left:685px;top:155px"></div><div class="dt" style="left:689px;top:150px"></div><div class="dt" style="left:693px;top:155px"></div><div class="dt" style="left:697px;top:150px"></div><div class="dt" style="left:701px;top:155px"></div><div class="dt" style="left:705px;top:150px"></div><div class="dt" style="left:709px;top:155px"></div><div class="dt" style="left:713px;top:150px"></div><div class="dt" style="left:717px;top:155px"></div><div class="dt" style="left:721px;top:150px"></div><div class="dt" style="left:725px;top:155px"></div><div class="dt" style="left:729px;top:150px"></div><div class="dt" style="left:733px;top:155px"></div>
<div class="th" style="left:982px;top:65px;width:13px;height:85px;border-width:0 0 0 1px;border-color:#fff"></div><div class="ab" style="left:981px;top:50px;border-radius:8px 8px 0 0"></div><svg class="a" style="left:981px;top:50px" width="15" height="15"><polygon points="4,10 11,10 7.5,6" fill="#4f6389"/></svg><div class="ab" style="left:981px;top:150px;border-radius:0 0 8px 8px"></div><svg class="a" style="left:981px;top:150px" width="15" height="15"><polygon points="4,5.5 11,5.5 7.5,9.5" fill="#4f6389"/></svg><div class="dt" style="left:990px;top:97px"></div><div class="dt" style="left:985px;top:101px"></div><div class="dt" style="left:990px;top:105px"></div><div class="dt" style="left:985px;top:109px"></div><div class="dt" style="left:990px;top:113px"></div>
<div class="b" style="left:335px;top:160px;width:77px"><span style="letter-spacing:-0.09px">Zrušit SŘ</span></div>
<div class="b d" style="left:420px;top:160px;width:78px"><span style="letter-spacing:-0.06px">Skartovat</span></div>
<div class="b d" style="left:505px;top:160px;width:78px"><span style="letter-spacing:0.16px">Archivovat</span></div>
<div class="a" style="left:306px;top:217px;width:692px;height:412px;background:#d7d7d7;border:1px solid;border-color:#fff #5b7096 #5b7096 #fff;border-radius:0 5px 5px 5px;box-shadow:inset 1px 1px 0 #c8c8c8,1px 1px 0 #e2e2e2"></div>
<div class="tab" style="left:306px;width:66px"><span style="letter-spacing:-0.09px">Entity</span></div>
<div class="tab" style="left:374px;width:64px;padding-left:1px"><span style="letter-spacing:-0.22px">SIPy</span></div>
<div class="a" style="left:436px;top:195px;width:68px;height:24px;background:#d0d0d0;font-weight:bold;text-align:center;line-height:26px;padding-left:3px"><span style="letter-spacing:0.33px">Seznamy</span></div>
<div class="red" style="left:436px;top:195px;width:68px;height:25px;border-radius:3px 3px 0 0;border-bottom-width:5px"></div>
<div class="l" style="left:323px;top:230px"><span style="letter-spacing:0.24px">Seznam č.</span></div>
<div class="f s" style="left:318px;top:247px;width:85px;height:19px;border:1px solid #ff0000;border-radius:0;box-shadow:none;line-height:18px;padding-left:2px"><span style="letter-spacing:-0.15px">S10073027</span></div>
<div class="f" style="left:318px;top:266px;width:85px"></div>
<div class="f" style="left:318px;top:285px;width:85px"></div>
<div class="f" style="left:318px;top:304px;width:85px"></div>
<div class="l" style="left:407px;top:230px"><span style="letter-spacing:0.12px">Archiv</span></div>
<div class="f s" style="left:403px;top:247px;width:86px"><span style="letter-spacing:-0.16px">CZ215000010</span></div>
<div class="f" style="left:403px;top:266px;width:86px"></div>
<div class="f" style="left:403px;top:285px;width:86px"></div>
<div class="f" style="left:403px;top:304px;width:86px"></div>
<div class="l" style="left:493px;top:230px"><span style="letter-spacing:0.16px">Původce</span></div>
<div class="f s" style="left:489px;top:247px;width:103px"><span style="letter-spacing:-0.75px">BBM_DEMO</span></div>
<div class="f" style="left:489px;top:266px;width:103px"></div>
<div class="f" style="left:489px;top:285px;width:103px"></div>
<div class="f" style="left:489px;top:304px;width:103px"></div>
<div class="l" style="left:593px;top:230px"><span style="letter-spacing:0.28px">Skart. řízení</span></div>
<div class="f s" style="left:592px;top:247px;width:104px"><span style="letter-spacing:-0.31px">iFIS_073027</span></div>
<div class="f" style="left:592px;top:266px;width:104px"></div>
<div class="f" style="left:592px;top:285px;width:104px"></div>
<div class="f" style="left:592px;top:304px;width:104px"></div>
<div class="l" style="left:696px;top:230px"><span style="letter-spacing:0.39px">Přejímka</span></div>
<div class="f s" style="left:696px;top:247px;width:76px"></div>
<div class="f" style="left:696px;top:266px;width:76px"></div>
<div class="f" style="left:696px;top:285px;width:76px"></div>
<div class="f" style="left:696px;top:304px;width:76px"></div>
<div class="l" style="left:772px;top:230px"><span style="letter-spacing:0.36px">Vytvořen</span></div>
<div class="f s" style="left:772px;top:247px;width:66px"><span style="letter-spacing:-0.11px">10.04.2018</span></div>
<div class="f" style="left:772px;top:266px;width:66px"></div>
<div class="f" style="left:772px;top:285px;width:66px"></div>
<div class="f" style="left:772px;top:304px;width:66px"></div>
<div class="l" style="left:838px;top:230px"><span style="letter-spacing:0.15px">Zpracován</span></div>
<div class="f s" style="left:838px;top:247px;width:66px"><span style="letter-spacing:-0.11px">10.04.2018</span></div>
<div class="f" style="left:838px;top:266px;width:66px"></div>
<div class="f" style="left:838px;top:285px;width:66px"></div>
<div class="f" style="left:838px;top:304px;width:66px"></div>
<div class="b" style="left:906px;top:248px;width:54px;height:17px;line-height:16px"><span style="letter-spacing:-0.27px">Ukaž</span></div>
<div class="b d" style="left:906px;top:267px;width:54px;height:17px;line-height:16px"><span style="letter-spacing:-0.27px">Ukaž</span></div>
<div class="b d" style="left:906px;top:286px;width:54px;height:17px;line-height:16px"><span style="letter-spacing:-0.27px">Ukaž</span></div>
<div class="b d" style="left:906px;top:305px;width:54px;height:17px;line-height:16px"><span style="letter-spacing:-0.27px">Ukaž</span></div>
<div class="th" style="left:967px;top:262px;width:13px;height:46px;border-width:0 0 0 1px;border-color:#fff"></div><div class="ab" style="left:966px;top:247px;border-radius:8px 8px 0 0"></div><svg class="a" style="left:966px;top:247px" width="15" height="15"><polygon points="4,10 11,10 7.5,6" fill="#4f6389"/></svg><div class="ab" style="left:966px;top:308px;border-radius:0 0 8px 8px"></div><svg class="a" style="left:966px;top:308px" width="15" height="15"><polygon points="4,5.5 11,5.5 7.5,9.5" fill="#4f6389"/></svg><div class="dt" style="left:975px;top:280px"></div><div class="dt" style="left:970px;top:284px"></div><div class="dt" style="left:975px;top:288px"></div>
<div class="red" style="left:305px;top:216px;width:603px;height:60px"></div>
<div class="b" style="left:846px;top:335px;width:77px;height:17px"><span style="letter-spacing:-0.06px">Nový seznam</span></div>
<div class="a" style="left:0;top:0;width:967px;height:632px;overflow:hidden">
<div class="l" style="left:322px;top:382px"><span style="letter-spacing:-0.09px">Entita</span></div>
<div class="f" style="left:318px;top:399px;width:54px"><span style="letter-spacing:-0.39px">Dokument</span></div>
<div class="f" style="left:318px;top:418px;width:54px"><span style="letter-spacing:-0.39px">Dokument</span></div>
<div class="f" style="left:318px;top:437px;width:54px"><span style="letter-spacing:-0.39px">Dokument</span></div>
<div class="f" style="left:318px;top:456px;width:54px"><span style="letter-spacing:-0.10px">Spis</span></div>
<div class="f" style="left:318px;top:475px;width:54px"></div>
<div class="f" style="left:318px;top:494px;width:54px"></div>
<div class="f" style="left:318px;top:513px;width:54px"></div>
<div class="f" style="left:318px;top:532px;width:54px"></div>
<div class="f" style="left:318px;top:551px;width:54px"></div>
<div class="f" style="left:318px;top:570px;width:54px"></div>
<div class="l" style="left:376px;top:382px">Název</div>
<div class="f" style="left:372px;top:399px;width:72px"><span style="letter-spacing:-0.24px">D138673</span></div>
<div class="f" style="left:372px;top:418px;width:72px"><span style="letter-spacing:-0.24px">D133242</span></div>
<div class="f" style="left:372px;top:437px;width:72px"><span style="letter-spacing:-0.24px">D135940</span></div>
<div class="f" style="left:372px;top:456px;width:72px"><span style="letter-spacing:-0.18px">S587</span></div>
<div class="f" style="left:372px;top:475px;width:72px"></div>
<div class="f" style="left:372px;top:494px;width:72px"></div>
<div class="f" style="left:372px;top:513px;width:72px"></div>
<div class="f" style="left:372px;top:532px;width:72px"></div>
<div class="f" style="left:372px;top:551px;width:72px"></div>
<div class="f" style="left:372px;top:570px;width:72px"></div>
<div class="l" style="left:448px;top:382px"><span style="letter-spacing:0.21px">Popis</span></div>
<div class="f" style="left:444px;top:399px;width:161px"><span style="letter-spacing:-0.27px">balíček</span></div>
<div class="f" style="left:444px;top:418px;width:161px"><span style="letter-spacing:-0.13px">doklady</span></div>
<div class="f" style="left:444px;top:437px;width:161px"><span style="letter-spacing:-0.18px">balíky 2 ks</span></div>
<div class="f" style="left:444px;top:456px;width:161px"><span style="letter-spacing:-0.19px">Balíky a balíčky 2009</span></div>
<div class="f" style="left:444px;top:475px;width:161px"></div>
<div class="f" style="left:444px;top:494px;width:161px"></div>
<div class="f" style="left:444px;top:513px;width:161px"></div>
<div class="f" style="left:444px;top:532px;width:161px"></div>
<div class="f" style="left:444px;top:551px;width:161px"></div>
<div class="f" style="left:444px;top:570px;width:161px"></div>
<div class="l" style="left:614px;top:382px"><span style="letter-spacing:0.28px">Operace</span></div>
<div class="f" style="left:610px;top:399px;width:99px">předložit k výběru</div>
<div class="f" style="left:610px;top:418px;width:99px">předložit k výběru</div>
<div class="f" style="left:610px;top:437px;width:99px">předložit k výběru</div>
<div class="f" style="left:610px;top:456px;width:99px">předložit k výběru</div>
<div class="f" style="left:610px;top:475px;width:99px"></div>
<div class="f" style="left:610px;top:494px;width:99px"></div>
<div class="f" style="left:610px;top:513px;width:99px"></div>
<div class="f" style="left:610px;top:532px;width:99px"></div>
<div class="f" style="left:610px;top:551px;width:99px"></div>
<div class="f" style="left:610px;top:570px;width:99px"></div>
<div class="l" style="left:713px;top:382px"><span style="letter-spacing:0.19px">Identifikator DA</span></div>
<div class="f" style="left:709px;top:399px;width:113px"></div>
<div class="f" style="left:709px;top:418px;width:113px"></div>
<div class="f" style="left:709px;top:437px;width:113px"></div>
<div class="f" style="left:709px;top:456px;width:113px"></div>
<div class="f" style="left:709px;top:475px;width:113px"></div>
<div class="f" style="left:709px;top:494px;width:113px"></div>
<div class="f" style="left:709px;top:513px;width:113px"></div>
<div class="f" style="left:709px;top:532px;width:113px"></div>
<div class="f" style="left:709px;top:551px;width:113px"></div>
<div class="f" style="left:709px;top:570px;width:113px"></div>
<div class="l" style="left:826px;top:382px"><span style="letter-spacing:0.07px">Zdroj DA</span></div>
<div class="f" style="left:822px;top:399px;width:81px"></div>
<div class="f" style="left:822px;top:418px;width:81px"></div>
<div class="f" style="left:822px;top:437px;width:81px"></div>
<div class="f" style="left:822px;top:456px;width:81px"></div>
<div class="f" style="left:822px;top:475px;width:81px"></div>
<div class="f" style="left:822px;top:494px;width:81px"></div>
<div class="f" style="left:822px;top:513px;width:81px"></div>
<div class="f" style="left:822px;top:532px;width:81px"></div>
<div class="f" style="left:822px;top:551px;width:81px"></div>
<div class="f" style="left:822px;top:570px;width:81px"></div>
<div class="l" style="left:916px;top:382px"><span style="letter-spacing:-0.45px">PID</span></div>
<div class="f" style="left:912px;top:399px;width:63px"><span style="letter-spacing:-0.07px">05560-140</span></div>
<div class="f" style="left:912px;top:418px;width:63px"><span style="letter-spacing:-0.07px">05029-140</span></div>
<div class="f" style="left:912px;top:437px;width:63px"><span style="letter-spacing:-0.07px">05334-140</span></div>
<div class="f" style="left:912px;top:456px;width:63px"></div>
<div class="f" style="left:912px;top:475px;width:63px"></div>
<div class="f" style="left:912px;top:494px;width:63px"></div>
<div class="f" style="left:912px;top:513px;width:63px"></div>
<div class="f" style="left:912px;top:532px;width:63px"></div>
<div class="f" style="left:912px;top:551px;width:63px"></div>
<div class="f" style="left:912px;top:570px;width:63px"></div>
</div>
<div class="a" style="left:607px;top:399px;width:1px;height:190px;background:#6a6a6a"></div><div class="a" style="left:608px;top:399px;width:1px;height:190px;background:#fff"></div>
<div class="trk" style="left:610px;top:595px;width:357px;height:15px"></div><div class="th" style="left:624px;top:595px;height:15px;width:103px;border-width:1px;border-color:#7a8bab;box-shadow:inset 1px 1px 0 #fff"></div><div class="a" style="left:611px;top:596px;width:13px;height:13px;border-radius:7px 0 0 7px;background:#d0d0d0;border:1px solid;border-color:#fff #d0d0d0 #e8e8e8 #fff"></div><svg class="a" style="left:610px;top:595px" width="15" height="15"><polygon points="10,4 10,11 6,7.5" fill="#4f6389"/></svg><div class="a" style="left:952px;top:596px;width:14px;height:13px;border-radius:0 7px 7px 0;background:#d0d0d0;border:1px solid;border-color:#fff #d8d8d8 #d8d8d8 #fff"></div><svg class="a" style="left:952px;top:595px" width="15" height="15"><polygon points="5,4 5,11 9,7.5" fill="#4f6389"/></svg><div class="dt" style="left:660px;top:604px"></div><div class="dt" style="left:664px;top:599px"></div><div class="dt" style="left:668px;top:604px"></div><div class="dt" style="left:672px;top:599px"></div><div class="dt" style="left:676px;top:604px"></div><div class="dt" style="left:680px;top:599px"></div><div class="dt" style="left:684px;top:604px"></div><div class="dt" style="left:688px;top:599px"></div><div class="dt" style="left:692px;top:604px"></div>
<div class="th" style="left:972px;top:415px;width:13px;height:160px;border-width:0 0 0 1px;border-color:#fff"></div><div class="ab" style="left:971px;top:400px;border-radius:8px 8px 0 0"></div><svg class="a" style="left:971px;top:400px" width="15" height="15"><polygon points="4,10 11,10 7.5,6" fill="#4f6389"/></svg><div class="ab" style="left:971px;top:575px;border-radius:0 0 8px 8px"></div><svg class="a" style="left:971px;top:575px" width="15" height="15"><polygon points="4,5.5 11,5.5 7.5,9.5" fill="#4f6389"/></svg><div class="dt" style="left:980px;top:469px"></div><div class="dt" style="left:975px;top:473px"></div><div class="dt" style="left:980px;top:477px"></div><div class="dt" style="left:975px;top:481px"></div><div class="dt" style="left:980px;top:485px"></div><div class="dt" style="left:975px;top:489px"></div><div class="dt" style="left:980px;top:493px"></div><div class="dt" style="left:975px;top:497px"></div><div class="dt" style="left:980px;top:501px"></div><div class="dt" style="left:975px;top:505px"></div><div class="dt" style="left:980px;top:509px"></div>
</body></html>
